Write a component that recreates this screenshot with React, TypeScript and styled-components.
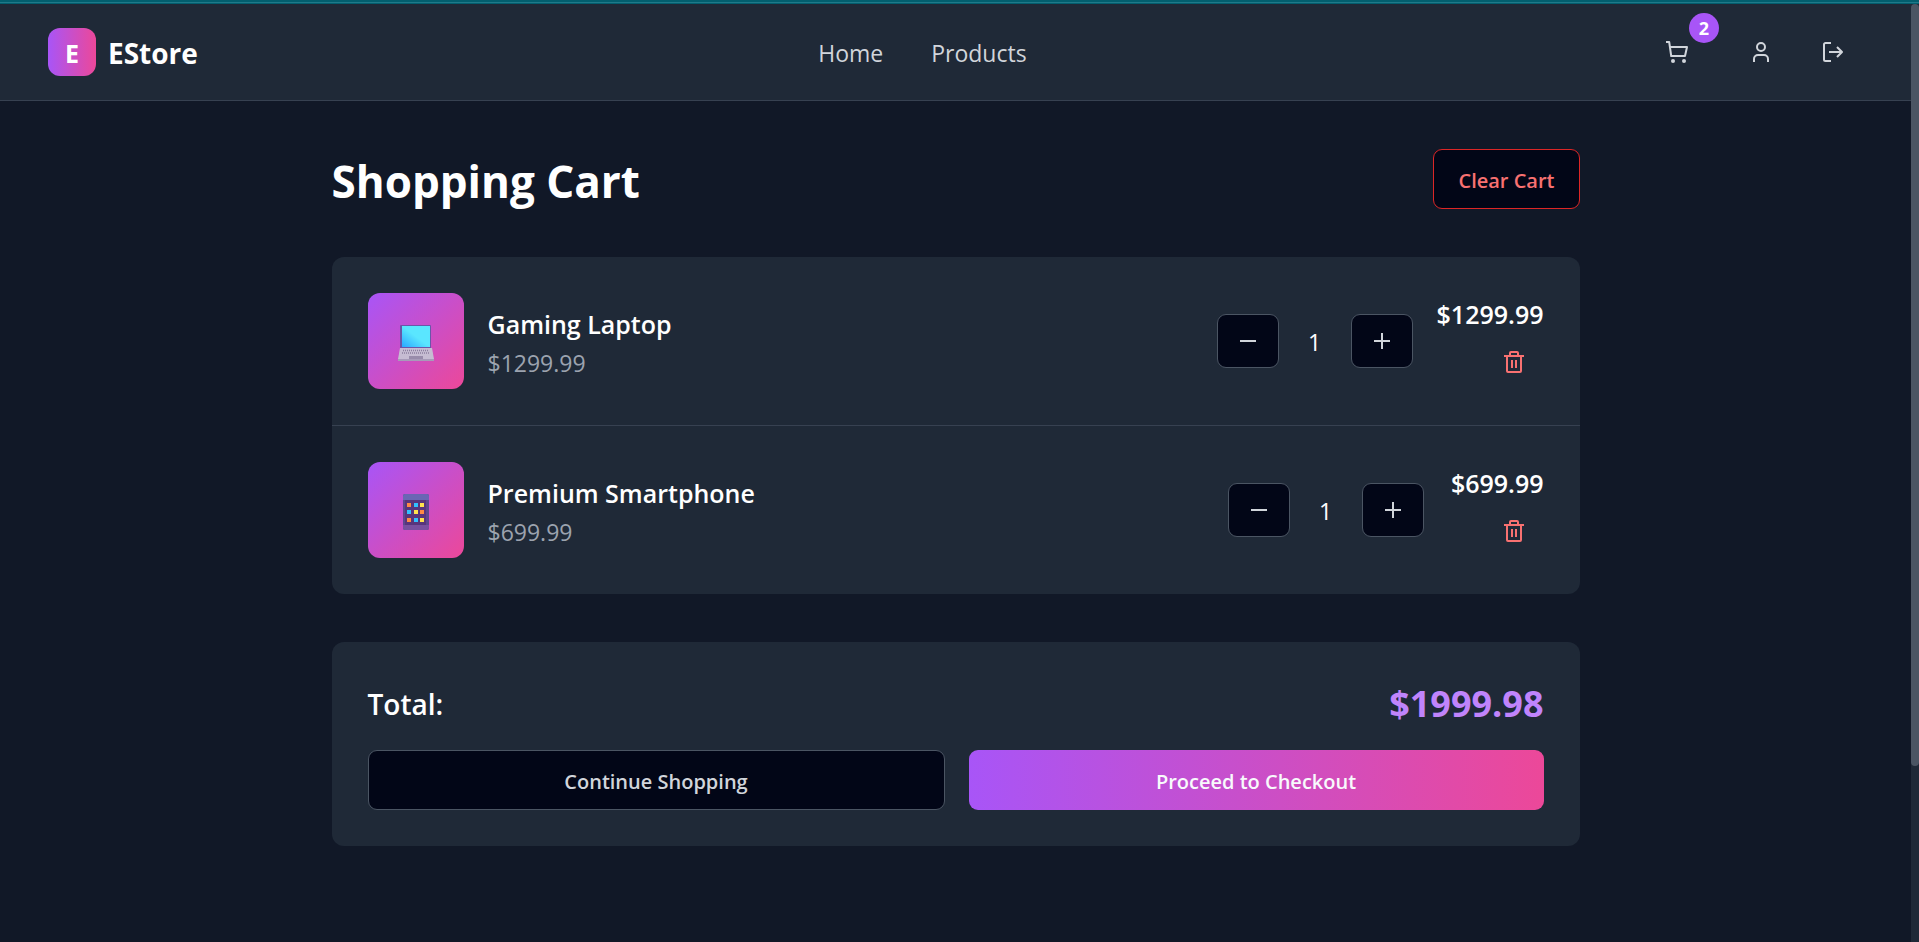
import React from 'react';
import styled, { createGlobalStyle } from 'styled-components';

const GlobalStyle = createGlobalStyle`
  *, *::before, *::after { box-sizing: border-box; }
  html, body { margin: 0; padding: 0; background: #111827; }
  body {
    font-family: 'Segoe UI', 'Open Sans', 'Noto Sans', sans-serif;
    font-size: 23px;
    line-height: 36px;
    color: #ffffff;
  }
  button { font-family: inherit; cursor: pointer; }
  h1, h2, p { margin: 0; }
`;

const Viewport = styled.div`
  display: flex;
  flex-direction: column;
  height: 100vh;
  overflow: hidden;
`;

const TopStrip = styled.div`
  flex: none;
  height: 4px;
  background: linear-gradient(#035e6e 2px, #1f7a8a 2px, #1f7a8a 3px, #035e6e 3px);
`;

const Body = styled.div`
  flex: 1;
  min-height: 0;
  display: flex;
`;

const Page = styled.div`
  flex: 1;
  min-width: 0;
`;

const ScrollTrack = styled.div`
  width: 8px;
  background: #1f2937;
`;

const ScrollThumb = styled.div`
  height: 81.2%;
  border-radius: 4px;
  background: #4b5563;
`;

const Header = styled.header`
  display: flex;
  justify-content: space-between;
  align-items: center;
  height: 97px;
  padding: 0 48px;
  background: #1f2937;
  border-bottom: 1px solid #374151;
`;

const Brand = styled.a`
  display: flex;
  align-items: center;
  gap: 12px;
  color: #ffffff;
  text-decoration: none;
  font-size: 28px;
  font-weight: 700;
`;

const BrandMark = styled.span`
  display: flex;
  align-items: center;
  justify-content: center;
  width: 48px;
  height: 48px;
  padding-top: 2px;
  border-radius: 12px;
  background: linear-gradient(to right, #a855f7, #ec4899);
  font-size: 25px;
`;

const BrandName = styled.span`
  padding-top: 2px;
`;

const Nav = styled.nav`
  display: flex;
  gap: 48px;
  padding-top: 2px;
`;

const NavLink = styled.a`
  color: #d1d5db;
  text-decoration: none;
`;

const Actions = styled.div`
  display: flex;
  gap: 24px;
`;

const AccountActions = styled.div`
  display: flex;
  gap: 12px;
`;

const IconButton = styled.button<{ $danger?: boolean }>`
  position: relative;
  display: flex;
  align-items: center;
  justify-content: center;
  width: 60px;
  height: 54px;
  padding: 0;
  border: 0;
  background: none;
  color: ${(p) => (p.$danger ? '#f87171' : '#d1d5db')};
`;

const Badge = styled.span`
  position: absolute;
  top: -12px;
  right: -12px;
  width: 30px;
  height: 30px;
  border-radius: 50%;
  background: #a855f7;
  color: #ffffff;
  font-size: 18px;
  font-weight: 700;
  line-height: 30px;
`;

const Main = styled.main`
  max-width: 1344px;
  margin: 0 auto;
  padding: 48px;
`;

const TitleRow = styled.div`
  display: flex;
  align-items: center;
  justify-content: space-between;
  margin-bottom: 48px;
`;

const Title = styled.h1`
  padding-top: 4px;
  font-size: 44px;
  line-height: 56px;
  font-weight: 700;
`;

const Button = styled.button<{ $tone: 'danger' | 'plain' | 'primary' }>`
  height: 60px;
  padding: 2px 24px 0;
  border: ${(p) =>
    p.$tone === 'primary' ? '0' : p.$tone === 'danger' ? '1px solid #dc2626' : '1px solid #4b5563'};
  border-radius: 9px;
  background: ${(p) =>
    p.$tone === 'primary' ? 'linear-gradient(to right, #a855f7, #ec4899)' : '#020617'};
  color: ${(p) => (p.$tone === 'primary' ? '#f8fafc' : p.$tone === 'danger' ? '#f87171' : '#d1d5db')};
  font-size: 20px;
  font-weight: 600;
`;

const Panel = styled.section`
  border-radius: 12px;
  background: #1f2937;
`;

const ItemList = styled.ul`
  list-style: none;
  margin: 0;
  padding: 0;
`;

const Item = styled.li`
  display: flex;
  align-items: center;
  gap: 24px;
  padding: 36px;
  & + & { border-top: 1px solid #374151; }
`;

const Thumb = styled.div`
  display: flex;
  align-items: center;
  justify-content: center;
  width: 96px;
  height: 96px;
  padding-top: 4px;
  border-radius: 12px;
  background: linear-gradient(to bottom right, #a855f7, #ec4899);
`;

const Info = styled.div`
  flex: 1;
  padding-top: 2px;
`;

const ItemName = styled.h2`
  font-size: 25px;
  line-height: 42px;
  font-weight: 600;
`;

const UnitPrice = styled.p`
  color: #9ca3af;
`;

const Quantity = styled.div`
  display: flex;
  align-items: center;
  gap: 12px;
`;

const StepButton = styled.button`
  display: flex;
  align-items: center;
  justify-content: center;
  width: 62px;
  height: 54px;
  padding: 0;
  border: 1px solid #4b5563;
  border-radius: 9px;
  background: #020617;
  color: #d1d5db;
`;

const Count = styled.span`
  width: 48px;
  padding-top: 2px;
  text-align: center;
`;

const LineTotal = styled.div`
  display: flex;
  flex-direction: column;
  align-items: flex-end;
  min-width: 96px;
`;

const LinePrice = styled.p`
  font-size: 25px;
  line-height: 42px;
  font-weight: 600;
`;

const Summary = styled(Panel)`
  margin-top: 48px;
  padding: 36px;
`;

const TotalRow = styled.div`
  display: flex;
  align-items: center;
  justify-content: space-between;
  padding-top: 4px;
  margin-bottom: 24px;
  line-height: 44px;
`;

const TotalLabel = styled.span`
  font-size: 28px;
  font-weight: 600;
`;

const TotalValue = styled.span`
  color: #c084fc;
  font-size: 36px;
  font-weight: 700;
`;

const ButtonRow = styled.div`
  display: flex;
  gap: 24px;
  & > * { flex: 1 1 0; }
`;

const CartIcon = () => (
  <svg width="24" height="24" viewBox="0 0 24 24" fill="none" stroke="currentColor" strokeWidth="2" aria-hidden="true">
    <path d="M1 2h3.2l2 14h13.8L22 7H5.2" strokeLinejoin="round" />
    <circle cx="8" cy="21" r="2" fill="currentColor" stroke="none" />
    <circle cx="19" cy="21" r="2" fill="currentColor" stroke="none" />
  </svg>
);

const UserIcon = () => (
  <svg width="24" height="24" viewBox="0 0 24 24" fill="none" stroke="currentColor" strokeWidth="2" aria-hidden="true">
    <circle cx="12" cy="7" r="4" />
    <path d="M5 22v-3a4 4 0 0 1 4-4h6a4 4 0 0 1 4 4v3" />
  </svg>
);

const LogoutIcon = () => (
  <svg width="24" height="24" viewBox="0 0 24 24" fill="none" stroke="currentColor" strokeWidth="2" aria-hidden="true">
    <path d="M10 3H4.500a1.500 1.500 0 0 0-1.500 1.500v15a1.500 1.500 0 0 0 1.500 1.500H10" />
    <path d="M8 12h13M16 7l5 5-5 5" strokeLinejoin="round" />
  </svg>
);

const TrashIcon = () => (
  <svg width="24" height="24" viewBox="0 0 24 24" fill="none" stroke="currentColor" strokeWidth="2" aria-hidden="true">
    <path d="M2 6h20M8 6V3a1 1 0 0 1 1-1h6a1 1 0 0 1 1 1v3M5 6v15a1 1 0 0 0 1 1h12a1 1 0 0 0 1-1V6M10 10v8M14 10v8" />
  </svg>
);

const MinusIcon = () => (
  <svg width="16" height="16" viewBox="0 0 16 16" stroke="currentColor" strokeWidth="2" aria-hidden="true">
    <path d="M0 8h16" />
  </svg>
);

const PlusIcon = () => (
  <svg width="16" height="16" viewBox="0 0 16 16" stroke="currentColor" strokeWidth="2" aria-hidden="true">
    <path d="M0 8h16M8 0v16" />
  </svg>
);

const LaptopArt = () => (
  <svg width="36" height="36" viewBox="0 0 36 36" role="img" aria-label="Laptop">
    <defs>
      <linearGradient id="screen" x1="0" y1="1" x2="1" y2="0">
        <stop offset="0" stopColor="#2aa8ff" />
        <stop offset="0.5" stopColor="#5ae6ff" />
        <stop offset="1" stopColor="#5ae6ff" />
      </linearGradient>
    </defs>
    <rect x="2" y="0" width="31" height="24" rx="1" fill="#6b56a8" />
    <rect x="4" y="1" width="28" height="21" fill="url(#screen)" />
    <path d="M2 23h32l2 11H0z" fill="#c6bcd2" />
    <path d="M0 34h36v2H0z" fill="#a79bb8" />
    <path d="M5 25.500h26M4 28h28" stroke="#8c7f9f" strokeWidth="1.500" strokeDasharray="1 1" />
    <rect x="11" y="31" width="14" height="3" fill="#998cab" />
  </svg>
);

const PhoneArt = () => (
  <svg width="26" height="36" viewBox="0 0 26 36" role="img" aria-label="Smartphone">
    <rect width="26" height="36" rx="2" fill="#5d4790" />
    <path d="M2 0h22a2 2 0 0 1 2 2v4H0V2a2 2 0 0 1 2-2z" fill="#6a66b4" />
    <rect x="2" y="6" width="21" height="25" fill="#58357c" />
    <path d="M0 31h26v3a2 2 0 0 1-2 2H2a2 2 0 0 1-2-2z" fill="#78509f" />
    <g fill="#ff8a45"><rect x="4" y="9" width="4" height="4" /><rect x="17" y="16" width="4" height="4" /><rect x="4" y="24" width="4" height="4" /></g>
    <g fill="#31c0ff"><rect x="11" y="9" width="4" height="4" /><rect x="4" y="16" width="4" height="4" /><rect x="11" y="24" width="4" height="4" /></g>
    <g fill="#ffe34f"><rect x="17" y="9" width="4" height="4" /><rect x="11" y="16" width="4" height="4" /><rect x="17" y="24" width="4" height="4" /></g>
  </svg>
);

const items = [
  { name: 'Gaming Laptop', price: 1299.99, quantity: 1, art: <LaptopArt /> },
  { name: 'Premium Smartphone', price: 699.99, quantity: 1, art: <PhoneArt /> },
];

const money = (value: number) => `$${value.toFixed(2)}`;

export default function App() {
  const total = items.reduce((sum, item) => sum + item.price * item.quantity, 0);
  return (
    <Viewport>
      <GlobalStyle />
      <TopStrip />
      <Body>
        <Page>
          <Header>
            <Brand href="#">
              <BrandMark>E</BrandMark>
              <BrandName>EStore</BrandName>
            </Brand>
            <Nav>
              <NavLink href="#">Home</NavLink>
              <NavLink href="#">Products</NavLink>
            </Nav>
            <Actions>
              <IconButton aria-label="Cart">
                <CartIcon />
                <Badge>{items.length}</Badge>
              </IconButton>
              <AccountActions>
                <IconButton aria-label="Account"><UserIcon /></IconButton>
                <IconButton aria-label="Log out"><LogoutIcon /></IconButton>
              </AccountActions>
            </Actions>
          </Header>
          <Main>
            <TitleRow>
              <Title>Shopping Cart</Title>
              <Button $tone="danger">Clear Cart</Button>
            </TitleRow>
            <Panel>
              <ItemList>
                {items.map((item) => (
                  <Item key={item.name}>
                    <Thumb>{item.art}</Thumb>
                    <Info>
                      <ItemName>{item.name}</ItemName>
                      <UnitPrice>{money(item.price)}</UnitPrice>
                    </Info>
                    <Quantity>
                      <StepButton aria-label="Decrease quantity"><MinusIcon /></StepButton>
                      <Count>{item.quantity}</Count>
                      <StepButton aria-label="Increase quantity"><PlusIcon /></StepButton>
                    </Quantity>
                    <LineTotal>
                      <LinePrice>{money(item.price * item.quantity)}</LinePrice>
                      <IconButton $danger aria-label="Remove item"><TrashIcon /></IconButton>
                    </LineTotal>
                  </Item>
                ))}
              </ItemList>
            </Panel>
            <Summary>
              <TotalRow>
                <TotalLabel>Total:</TotalLabel>
                <TotalValue>{money(total)}</TotalValue>
              </TotalRow>
              <ButtonRow>
                <Button $tone="plain">Continue Shopping</Button>
                <Button $tone="primary">Proceed to Checkout</Button>
              </ButtonRow>
            </Summary>
          </Main>
        </Page>
        <ScrollTrack>
          <ScrollThumb />
        </ScrollTrack>
      </Body>
    </Viewport>
  );
}
